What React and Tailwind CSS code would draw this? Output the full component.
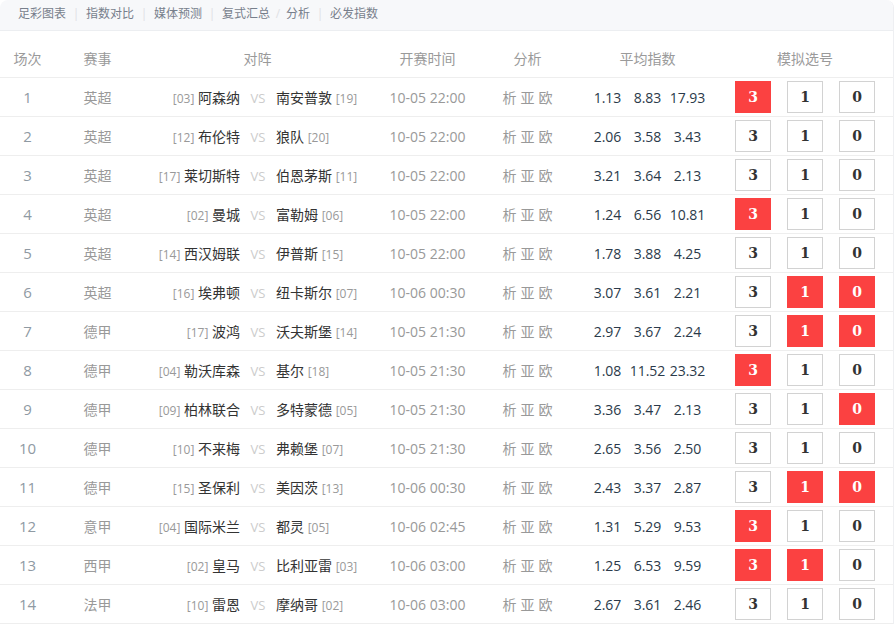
import React from 'react';

const navItems = [
  ['足彩图表', '|', 'w-5'],
  ['指数对比', '|', 'w-5'],
  ['媒体预测', '|', 'w-5'],
  ['复式汇总', '/', 'w-4'],
  ['分析', '|', 'w-5'],
  ['必发指数', '', ''],
];

const matches = [
  { no: 1, league: '英超', homeRank: '[03]', home: '阿森纳', away: '南安普敦', awayRank: '[19]', time: '10-05 22:00', odds: ['1.13', '8.83', '17.93'], picks: ['3'] },
  { no: 2, league: '英超', homeRank: '[12]', home: '布伦特', away: '狼队', awayRank: '[20]', time: '10-05 22:00', odds: ['2.06', '3.58', '3.43'], picks: [] },
  { no: 3, league: '英超', homeRank: '[17]', home: '莱切斯特', away: '伯恩茅斯', awayRank: '[11]', time: '10-05 22:00', odds: ['3.21', '3.64', '2.13'], picks: [] },
  { no: 4, league: '英超', homeRank: '[02]', home: '曼城', away: '富勒姆', awayRank: '[06]', time: '10-05 22:00', odds: ['1.24', '6.56', '10.81'], picks: ['3'] },
  { no: 5, league: '英超', homeRank: '[14]', home: '西汉姆联', away: '伊普斯', awayRank: '[15]', time: '10-05 22:00', odds: ['1.78', '3.88', '4.25'], picks: [] },
  { no: 6, league: '英超', homeRank: '[16]', home: '埃弗顿', away: '纽卡斯尔', awayRank: '[07]', time: '10-06 00:30', odds: ['3.07', '3.61', '2.21'], picks: ['1', '0'] },
  { no: 7, league: '德甲', homeRank: '[17]', home: '波鸿', away: '沃夫斯堡', awayRank: '[14]', time: '10-05 21:30', odds: ['2.97', '3.67', '2.24'], picks: ['1', '0'] },
  { no: 8, league: '德甲', homeRank: '[04]', home: '勒沃库森', away: '基尔', awayRank: '[18]', time: '10-05 21:30', odds: ['1.08', '11.52', '23.32'], picks: ['3'] },
  { no: 9, league: '德甲', homeRank: '[09]', home: '柏林联合', away: '多特蒙德', awayRank: '[05]', time: '10-05 21:30', odds: ['3.36', '3.47', '2.13'], picks: ['0'] },
  { no: 10, league: '德甲', homeRank: '[10]', home: '不来梅', away: '弗赖堡', awayRank: '[07]', time: '10-05 21:30', odds: ['2.65', '3.56', '2.50'], picks: [] },
  { no: 11, league: '德甲', homeRank: '[15]', home: '圣保利', away: '美因茨', awayRank: '[13]', time: '10-06 00:30', odds: ['2.43', '3.37', '2.87'], picks: ['1', '0'] },
  { no: 12, league: '意甲', homeRank: '[04]', home: '国际米兰', away: '都灵', awayRank: '[05]', time: '10-06 02:45', odds: ['1.31', '5.29', '9.53'], picks: ['3'] },
  { no: 13, league: '西甲', homeRank: '[02]', home: '皇马', away: '比利亚雷', awayRank: '[03]', time: '10-06 03:00', odds: ['1.25', '6.53', '9.59'], picks: ['3', '1'] },
  { no: 14, league: '法甲', homeRank: '[10]', home: '雷恩', away: '摩纳哥', awayRank: '[02]', time: '10-06 03:00', odds: ['2.67', '3.61', '2.46'], picks: [] },
];

const gridCols = 'grid grid-cols-[55px_85px_235px_105px_95px_145px_170px] items-center';

const PickButton = ({ value, active }) => (
  <div
    className={
      active
        ? 'flex h-8 w-9 items-center justify-center bg-[#fb4141] text-sm font-bold text-white font-["DejaVu_Serif",serif]'
        : 'flex h-8 w-9 items-center justify-center border border-[#d2d2d2] text-sm font-bold text-[#333333] font-["DejaVu_Serif",serif]'
    }
  >
    {value}
  </div>
);

const App = () => {
  return (
    <div className='h-[631px] w-[895px] overflow-hidden bg-white text-sm font-["Open_Sans","Noto_Sans_CJK_SC",sans-serif]'>
      <div className="w-[894px] overflow-hidden rounded-t-lg border-r border-[#eeeff2]">
        {/* top nav */}
        <div className="flex h-[31px] items-center border-b border-[#eceef1] bg-[#f7f8fa] pb-0.5 pl-[18px] text-xs text-[#777f8c]">
          {navItems.map(([label, sep, width]) => (
            <React.Fragment key={label}>
              <span>{label}</span>
              {sep && <span className={`${width} text-center text-[#dfe1e5]`}>{sep}</span>}
            </React.Fragment>
          ))}
        </div>

        {/* table head */}
        <div className={`${gridCols} h-[47px] border-b border-[#eeeeee] pt-[10px] text-center text-[#9a9a9a]`}>
          <div>场次</div>
          <div>赛事</div>
          <div>对阵</div>
          <div>开赛时间</div>
          <div>分析</div>
          <div>平均指数</div>
          <div>模拟选号</div>
        </div>

        {/* rows */}
        {matches.map((m) => (
          <div key={m.no} className={`${gridCols} h-[39px] border-b border-[#eeeeee] text-center`}>
            <div className="pt-0.5 text-[15px] text-[#8f9aa3]">{m.no}</div>
            <div className="pt-0.5 text-[#999999]">{m.league}</div>
            <div className="flex items-center pt-0.5">
              <div className="w-[100px] text-right text-[#333333]">
                <span className="text-xs text-[#999999]">{m.homeRank}</span> {m.home}
              </div>
              <div className="w-9 text-center text-[13px] text-[#cccccc]">VS</div>
              <div className="text-left text-[#333333]">
                {m.away} <span className="text-xs text-[#999999]">{m.awayRank}</span>
              </div>
            </div>
            <div className="pt-0.5 text-[#999999]">{m.time}</div>
            <div className="flex justify-center gap-1 pt-0.5 text-[#999999]">
              <span>析</span>
              <span>亚</span>
              <span>欧</span>
            </div>
            <div className="flex justify-center pt-0.5 text-[#2b3a4a]">
              {m.odds.map((o, i) => (
                <span key={i} className="w-10 text-center">{o}</span>
              ))}
            </div>
            <div className="flex justify-center gap-4">
              {['3', '1', '0'].map((v) => (
                <PickButton key={v} value={v} active={m.picks.includes(v)} />
              ))}
            </div>
          </div>
        ))}
      </div>
    </div>
  );
};

export default App;
